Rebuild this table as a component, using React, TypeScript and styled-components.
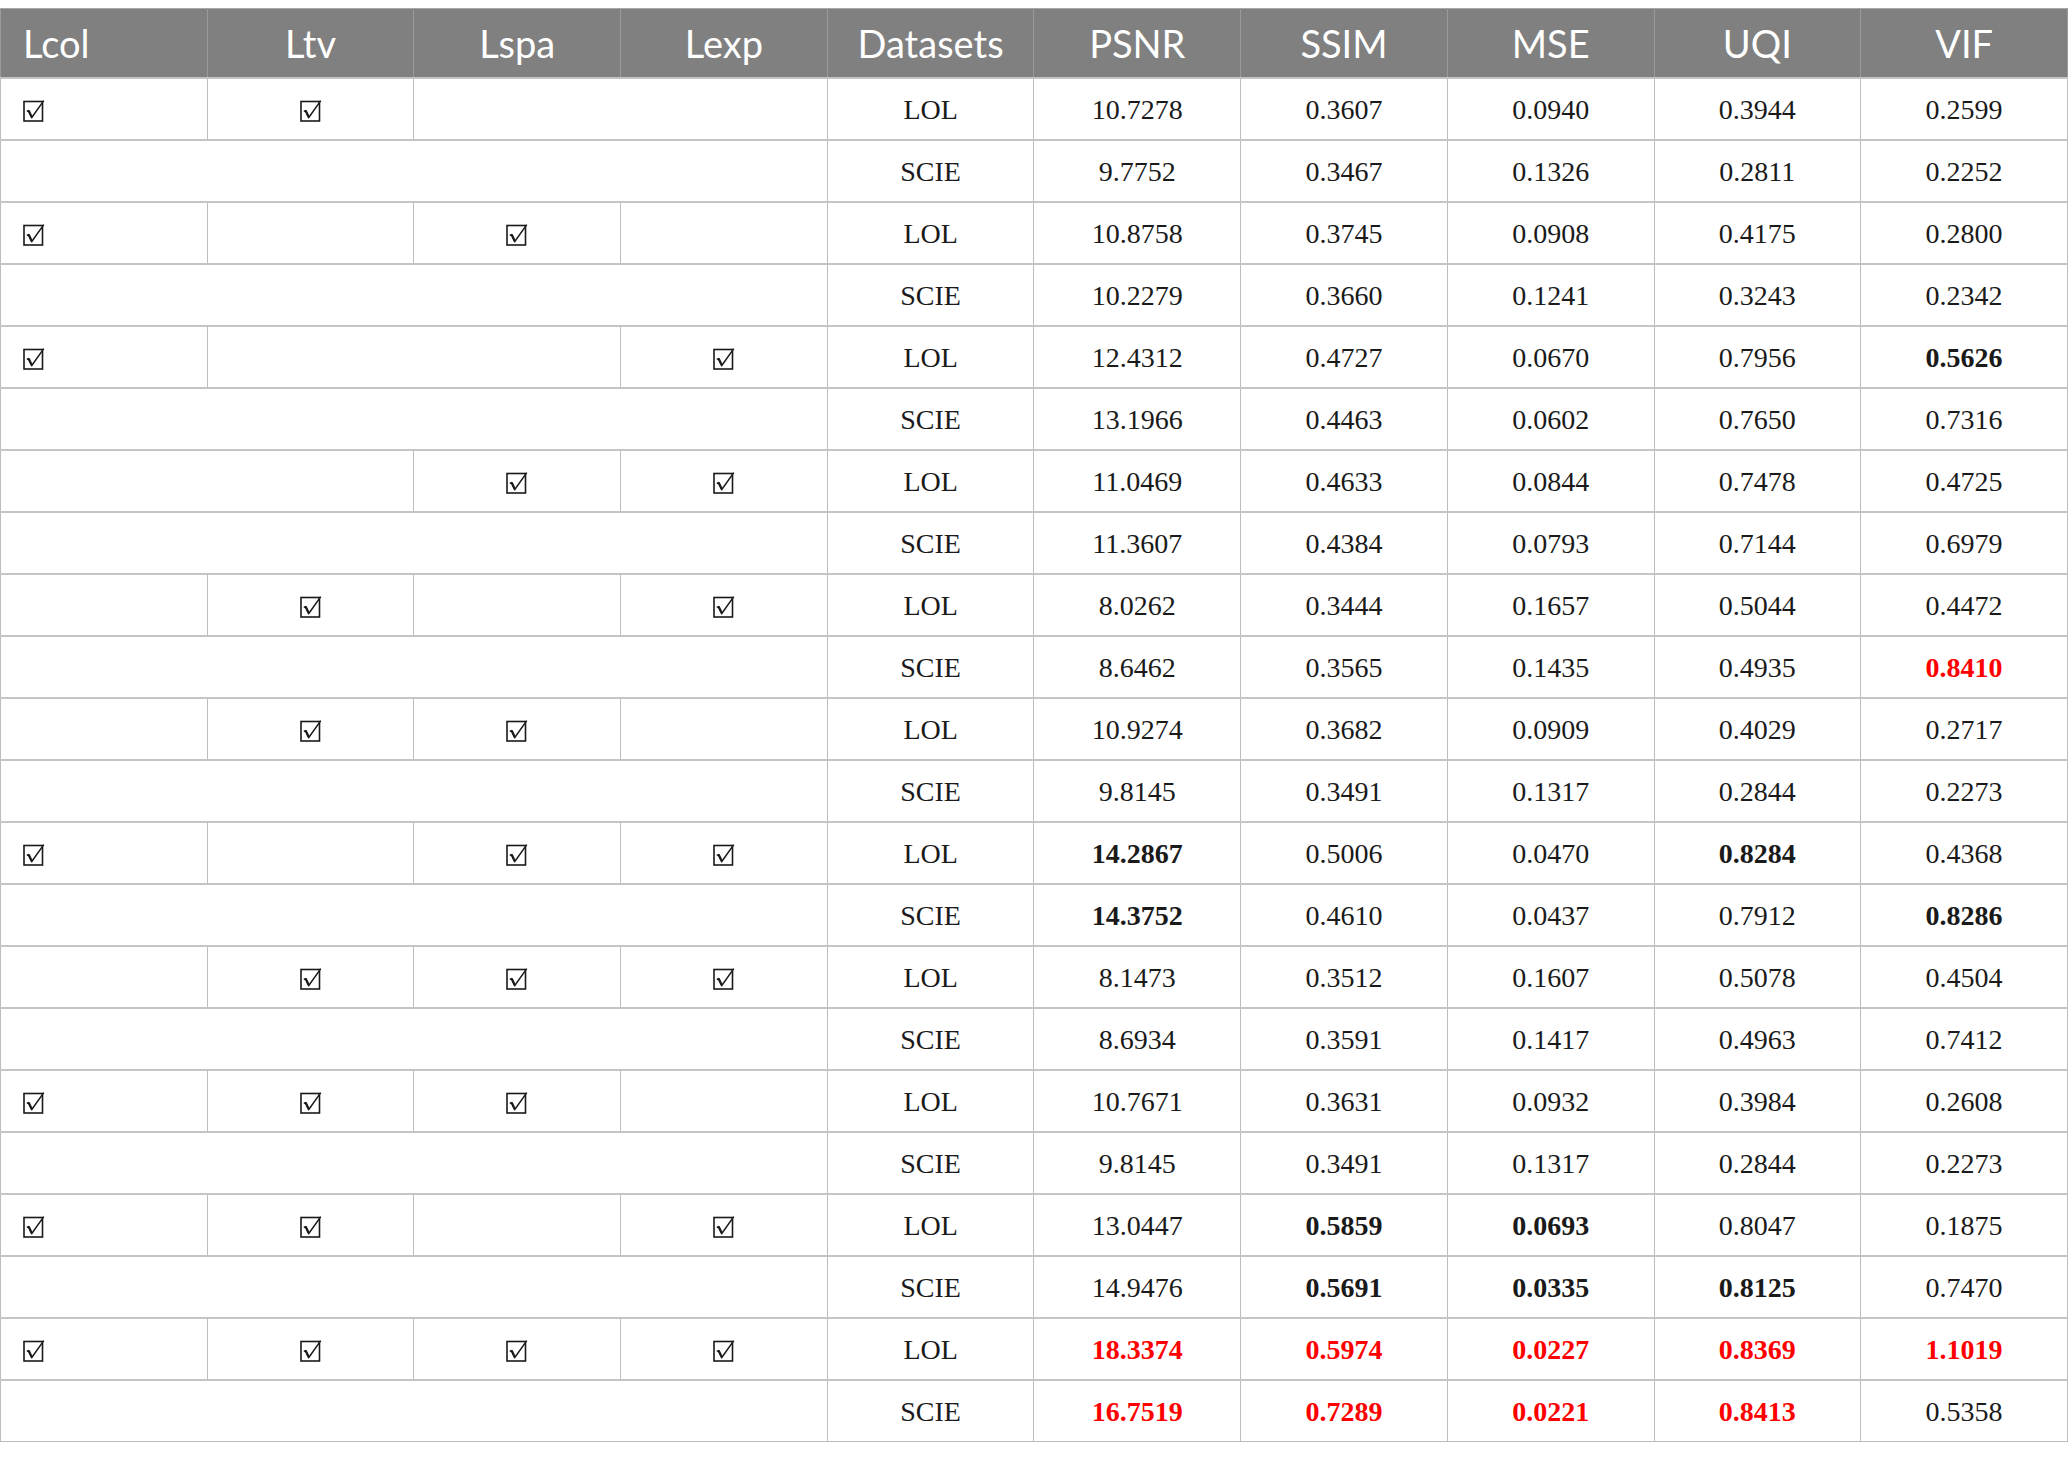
import React from "react";
import styled, { createGlobalStyle } from "styled-components";

const Global = createGlobalStyle`
  html, body { background: #ffffff; }
  body { margin: 8px 0 0 0; }
`;

const Table = styled.table`
  width: 2068px;
  border-collapse: collapse;
  table-layout: fixed;
`;

const HeadRow = styled.tr`
  height: 69px;
  background: #808080;
`;

const Th = styled.th<{ $left?: boolean }>`
  font-family: Lato, "Open Sans", sans-serif;
  font-weight: 400;
  font-size: 38px;
  color: #ffffff;
  text-align: ${(p) => (p.$left ? "left" : "center")};
  padding: 0 0 0 ${(p) => (p.$left ? "22px" : "0")};
  border: 1px solid #9a9a9a;
  border-top: 1px solid #a8a8a8;
  vertical-align: middle;
`;

const BodyRow = styled.tr`
  height: 62px;
`;

const Td = styled.td<{ $left?: boolean; $kind?: "n" | "b" | "r" }>`
  font-family: "Liberation Serif", "Times New Roman", serif;
  font-size: 28px;
  color: ${(p) => (p.$kind === "r" ? "#ff0000" : "#1a1a1a")};
  font-weight: ${(p) => (p.$kind === "b" || p.$kind === "r" ? 700 : 400)};
  text-align: ${(p) => (p.$left ? "left" : "center")};
  padding: 3px 0 0 ${(p) => (p.$left ? "22px" : "0")};
  border: 1px solid #bdbdbd;
  border-top: 2px solid #c4c4c4;
  vertical-align: middle;
  line-height: 1;
`;

const Box = styled.svg`
  display: inline-block;
  vertical-align: middle;
  width: 22px;
  height: 22px;
  margin-top: -4px;
`;

const Check = () => (
  <Box viewBox="0 0 22 22">
    <rect x="1" y="1.5" width="18.5" height="19.5" fill="#fff" stroke="#1a1a1a" strokeWidth="1.6" />
    <path d="M3.8 11.5 L5.6 10.6 L8.6 17.8 L20.8 0.6" fill="none" stroke="#1a1a1a" strokeWidth="1.5" strokeLinejoin="round" />
    <path d="M5.6 10.6 L8.4 16.2" fill="none" stroke="#1a1a1a" strokeWidth="2.2" />
  </Box>
);

type Kind = "n" | "b" | "r";
type Cell = [string, Kind];

interface Group {
  flags: boolean[];
  lol: Cell[];
  scie: Cell[];
}

const n = (v: string): Cell => [v, "n"];
const b = (v: string): Cell => [v, "b"];
const r = (v: string): Cell => [v, "r"];

const groups: Group[] = [
  {
    flags: [true, true, false, false],
    lol: [n("10.7278"), n("0.3607"), n("0.0940"), n("0.3944"), n("0.2599")],
    scie: [n("9.7752"), n("0.3467"), n("0.1326"), n("0.2811"), n("0.2252")],
  },
  {
    flags: [true, false, true, false],
    lol: [n("10.8758"), n("0.3745"), n("0.0908"), n("0.4175"), n("0.2800")],
    scie: [n("10.2279"), n("0.3660"), n("0.1241"), n("0.3243"), n("0.2342")],
  },
  {
    flags: [true, false, false, true],
    lol: [n("12.4312"), n("0.4727"), n("0.0670"), n("0.7956"), b("0.5626")],
    scie: [n("13.1966"), n("0.4463"), n("0.0602"), n("0.7650"), n("0.7316")],
  },
  {
    flags: [false, false, true, true],
    lol: [n("11.0469"), n("0.4633"), n("0.0844"), n("0.7478"), n("0.4725")],
    scie: [n("11.3607"), n("0.4384"), n("0.0793"), n("0.7144"), n("0.6979")],
  },
  {
    flags: [false, true, false, true],
    lol: [n("8.0262"), n("0.3444"), n("0.1657"), n("0.5044"), n("0.4472")],
    scie: [n("8.6462"), n("0.3565"), n("0.1435"), n("0.4935"), r("0.8410")],
  },
  {
    flags: [false, true, true, false],
    lol: [n("10.9274"), n("0.3682"), n("0.0909"), n("0.4029"), n("0.2717")],
    scie: [n("9.8145"), n("0.3491"), n("0.1317"), n("0.2844"), n("0.2273")],
  },
  {
    flags: [true, false, true, true],
    lol: [b("14.2867"), n("0.5006"), n("0.0470"), b("0.8284"), n("0.4368")],
    scie: [b("14.3752"), n("0.4610"), n("0.0437"), n("0.7912"), b("0.8286")],
  },
  {
    flags: [false, true, true, true],
    lol: [n("8.1473"), n("0.3512"), n("0.1607"), n("0.5078"), n("0.4504")],
    scie: [n("8.6934"), n("0.3591"), n("0.1417"), n("0.4963"), n("0.7412")],
  },
  {
    flags: [true, true, true, false],
    lol: [n("10.7671"), n("0.3631"), n("0.0932"), n("0.3984"), n("0.2608")],
    scie: [n("9.8145"), n("0.3491"), n("0.1317"), n("0.2844"), n("0.2273")],
  },
  {
    flags: [true, true, false, true],
    lol: [n("13.0447"), b("0.5859"), b("0.0693"), n("0.8047"), n("0.1875")],
    scie: [n("14.9476"), b("0.5691"), b("0.0335"), b("0.8125"), n("0.7470")],
  },
  {
    flags: [true, true, true, true],
    lol: [r("18.3374"), r("0.5974"), r("0.0227"), r("0.8369"), r("1.1019")],
    scie: [r("16.7519"), r("0.7289"), r("0.0221"), r("0.8413"), n("0.5358")],
  },
];

const headers = ["Lcol", "Ltv", "Lspa", "Lexp", "Datasets", "PSNR", "SSIM", "MSE", "UQI", "VIF"];

type Segment = { start: number; span: number; checked: boolean };

function segments(flags: boolean[]): Segment[] {
  const out: Segment[] = [];
  flags.forEach((f, i) => {
    const last = out[out.length - 1];
    if (!f && last && !last.checked) {
      last.span += 1;
    } else {
      out.push({ start: i, span: 1, checked: f });
    }
  });
  return out;
}

export default function App() {
  return (
    <>
      <Global />
      <Table>
        <colgroup>
          {headers.map((h) => (
            <col key={h} style={{ width: "10%" }} />
          ))}
        </colgroup>
        <thead>
          <HeadRow>
            {headers.map((h, i) => (
              <Th key={h} $left={i === 0}>
                {h}
              </Th>
            ))}
          </HeadRow>
        </thead>
        <tbody>
          {groups.map((g, gi) => (
            <React.Fragment key={gi}>
              <BodyRow>
                {segments(g.flags).map((s) => (
                  <Td key={s.start} colSpan={s.span} $left={s.start === 0}>
                    {s.checked ? <Check /> : null}
                  </Td>
                ))}
                <Td>LOL</Td>
                {g.lol.map(([v, k], i) => (
                  <Td key={i} $kind={k}>
                    {v}
                  </Td>
                ))}
              </BodyRow>
              <BodyRow>
                <Td colSpan={4} />
                <Td>SCIE</Td>
                {g.scie.map(([v, k], i) => (
                  <Td key={i} $kind={k}>
                    {v}
                  </Td>
                ))}
              </BodyRow>
            </React.Fragment>
          ))}
        </tbody>
      </Table>
    </>
  );
}
